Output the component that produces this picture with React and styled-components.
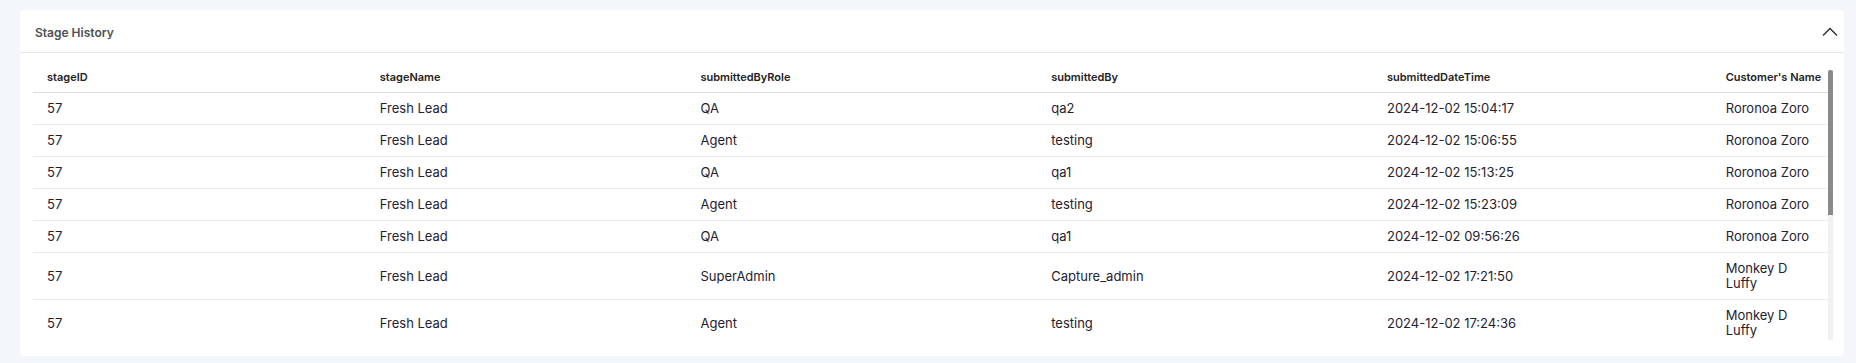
import React, { useState, useRef, useLayoutEffect } from "react";
import styled, { createGlobalStyle } from "styled-components";

const GlobalStyle = createGlobalStyle`
  html, body {
    margin: 0;
    padding: 0;
    background-color: #f3f6fb;
    font-family: Inter, "Noto Sans", sans-serif;
  }
`;

const columns = [
  { key: "stageID", label: "stageID", width: 332 },
  { key: "stageName", label: "stageName", width: 320 },
  { key: "submittedByRole", label: "submittedByRole", width: 350 },
  { key: "submittedBy", label: "submittedBy", width: 335 },
  { key: "submittedDateTime", label: "submittedDateTime", width: 338 },
  { key: "customerName", label: "Customer's Name", width: 116 },
];

const rows = [
  ["57", "Fresh Lead", "QA", "qa2", "2024-12-02 15:04:17", "Roronoa Zoro"],
  ["57", "Fresh Lead", "Agent", "testing", "2024-12-02 15:06:55", "Roronoa Zoro"],
  ["57", "Fresh Lead", "QA", "qa1", "2024-12-02 15:13:25", "Roronoa Zoro"],
  ["57", "Fresh Lead", "Agent", "testing", "2024-12-02 15:23:09", "Roronoa Zoro"],
  ["57", "Fresh Lead", "QA", "qa1", "2024-12-02 09:56:26", "Roronoa Zoro"],
  ["57", "Fresh Lead", "SuperAdmin", "Capture_admin", "2024-12-02 17:21:50", "Monkey D Luffy"],
  ["57", "Fresh Lead", "Agent", "testing", "2024-12-02 17:24:36", "Monkey D Luffy"],
  ["57", "Fresh Lead", "QA", "qa2", "2024-12-02 17:30:12", "Monkey D Luffy"],
  ["57", "Fresh Lead", "Agent", "testing", "2024-12-02 17:41:03", "Monkey D Luffy"],
  ["57", "Fresh Lead", "QA", "qa1", "2024-12-02 17:52:48", "Monkey D Luffy"],
  ["57", "Fresh Lead", "Agent", "testing", "2024-12-02 18:05:19", "Monkey D Luffy"],
  ["57", "Fresh Lead", "QA", "qa2", "2024-12-02 18:14:57", "Monkey D Luffy"],
];

export default function App() {
  const [open, setOpen] = useState(true);
  const [thumb, setThumb] = useState({ top: 0, height: 0 });
  const scrollRef = useRef(null);
  const trackRef = useRef(null);

  const updateThumb = () => {
    const el = scrollRef.current;
    const track = trackRef.current;
    if (!el || !track) return;
    const trackHeight = track.clientHeight;
    const height = Math.max(20, trackHeight * (el.clientHeight / el.scrollHeight));
    const maxScroll = el.scrollHeight - el.clientHeight;
    const top = maxScroll > 0 ? (el.scrollTop / maxScroll) * (trackHeight - height) : 0;
    setThumb({ top, height });
  };

  useLayoutEffect(() => {
    updateThumb();
  }, [open]);

  return (
    <>
      <GlobalStyle />
      <Page>
        <Card>
          <CardHeader onClick={() => setOpen(!open)}>
            <Title>Stage History</Title>
            <Chevron open={open} viewBox="0 0 16 10" width="16" height="10">
              <path d="M1 8.5 L8 1.5 L15 8.5" fill="none" stroke="#2b2b2b" strokeWidth="1.3" />
            </Chevron>
          </CardHeader>
          {open && (
            <CardBody>
              <ScrollWrap>
                <ScrollArea ref={scrollRef} onScroll={updateThumb}>
                  <Table>
                    <colgroup>
                      {columns.map((col) => (
                        <col key={col.key} style={{ width: col.width }} />
                      ))}
                    </colgroup>
                    <thead>
                      <tr>
                        {columns.map((col) => (
                          <HeadCell key={col.key}>{col.label}</HeadCell>
                        ))}
                      </tr>
                    </thead>
                    <tbody>
                      {rows.map((row, index) => (
                        <Row key={index}>
                          {row.map((value, i) => (
                            <Cell key={i}>{value}</Cell>
                          ))}
                        </Row>
                      ))}
                    </tbody>
                  </Table>
                </ScrollArea>
                <Track ref={trackRef}>
                  <Thumb style={{ top: thumb.top, height: thumb.height }} />
                </Track>
              </ScrollWrap>
            </CardBody>
          )}
        </Card>
      </Page>
    </>
  );
}

const Page = styled.div`
  padding: 10px 12px 7px 20px;
`;

const Card = styled.div`
  background-color: #ffffff;
  border-radius: 4px;
  overflow: hidden;
`;

const CardHeader = styled.div`
  display: flex;
  align-items: center;
  justify-content: space-between;
  height: 43px;
  padding: 2px 6px 0 15px;
  box-sizing: border-box;
  border-bottom: 1px solid #e4e6ea;
  cursor: pointer;
`;

const Title = styled.h3`
  margin: 0;
  font-size: 12px;
  font-weight: 600;
  color: #505050;
`;

const Chevron = styled.svg`
  display: block;
  transform: ${(p) => (p.open ? "none" : "rotate(180deg)")};
`;

const CardBody = styled.div`
  padding: 8px 11px 16px 13px;
`;

const ScrollWrap = styled.div`
  position: relative;
  padding-right: 5px;
`;

const ScrollArea = styled.div`
  height: 279px;
  overflow-y: auto;
  scrollbar-width: none;
  &::-webkit-scrollbar {
    display: none;
  }
`;

const Track = styled.div`
  position: absolute;
  top: 9px;
  bottom: 0;
  right: 0;
  width: 5px;
  background-color: #f1f1f1;
`;

const Thumb = styled.div`
  position: absolute;
  left: 0;
  width: 5px;
  background-color: #8a8a8a;
  border-radius: 2px 2px 0 0;
`;

const Table = styled.table`
  width: 100%;
  table-layout: fixed;
  border-collapse: collapse;
`;

const HeadCell = styled.th`
  position: sticky;
  top: 0;
  background-color: #ffffff;
  text-align: left;
  font-size: 11px;
  font-weight: 600;
  color: #232323;
  height: 32px;
  padding: 0 6px 0 14px;
  box-sizing: border-box;
  white-space: nowrap;
  box-shadow: inset 0 -1px 0 #dcdde1;
`;

const Row = styled.tr`
  border-bottom: 1px solid #ebecf0;
`;

const Cell = styled.td`
  font-size: 13px;
  line-height: 15px;
  color: #1f2230;
  padding: 8px 6px 8px 14px;
  vertical-align: middle;
`;
